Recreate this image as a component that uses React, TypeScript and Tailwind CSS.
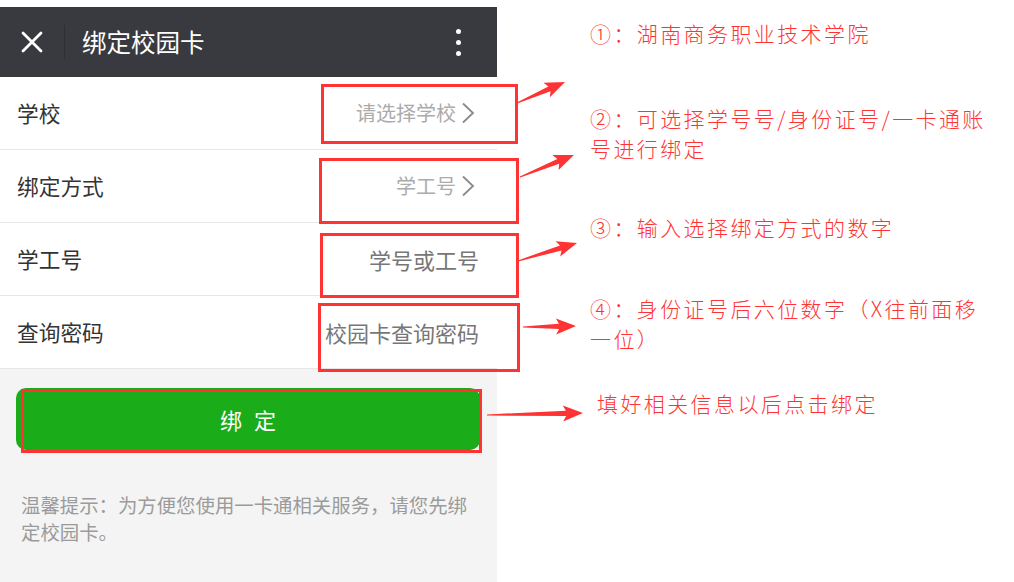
import React from "react";

type Pt = [number, number];

// tapered annotation arrow: thin tail, wide shaft near head, swept barbs
function arrowPoints(tail: Pt, tip: Pt) {
  const dx = tip[0] - tail[0];
  const dy = tip[1] - tail[1];
  const len = Math.hypot(dx, dy);
  const ux = dx / len;
  const uy = dy / len;
  const nx = -uy;
  const ny = ux;
  const headLen = 17;
  const base: Pt = [tip[0] - ux * headLen, tip[1] - uy * headLen];
  const barb: Pt = [base[0] - ux * 3, base[1] - uy * 3];
  const p = (o: Pt, k: number): string =>
    `${(o[0] + nx * k).toFixed(1)},${(o[1] + ny * k).toFixed(1)}`;
  return [
    p(tail, 0.6),
    p(base, 2.6),
    p(barb, 8),
    `${tip[0]},${tip[1]}`,
    p(barb, -8),
    p(base, -2.6),
    p(tail, -0.6),
  ].join(" ");
}

const arrows: [Pt, Pt][] = [
  [[517, 103], [565, 82]],
  [[520, 177], [574, 155]],
  [[518, 261], [577, 243]],
  [[523, 327], [576, 326]],
  [[487, 415], [583, 413]],
];

const boxes = [
  "left-[321px] top-[84px] w-[197px] h-[60px]",
  "left-[319px] top-[158px] w-[200px] h-[66px]",
  "left-[320px] top-[233px] w-[199px] h-[65px]",
  "left-[318px] top-[303px] w-[202px] h-[69px]",
  "left-[21px] top-[389px] w-[461px] h-[64px]",
];

function Chevron() {
  return (
    <svg width="14" height="22" viewBox="0 0 14 22" className="ml-[5px]">
      <polyline
        points="2,1.5 12,11 2,20.5"
        fill="none"
        stroke="#8a8a8a"
        strokeWidth="1.8"
      />
    </svg>
  );
}

function Row({
  label,
  children,
  padRight = "pr-[22px]",
}: {
  label: string;
  children: React.ReactNode;
  padRight?: string;
}) {
  return (
    <div
      className={`flex h-[73px] items-center justify-between border-b border-[#e6e6e6] bg-white pl-[17px] ${padRight}`}
    >
      <span className="text-[21.7px] text-[#333]">{label}</span>
      <div className="flex items-center">{children}</div>
    </div>
  );
}

const noteClass =
  "whitespace-nowrap text-[21px] font-light leading-[30px] tracking-[2.4px] text-[#f33]";

export default function App() {
  return (
    <div className="relative flex h-[582px] w-[1014px] overflow-hidden bg-white font-['Noto_Sans_CJK_SC',sans-serif]">
      {/* phone screenshot */}
      <div className="flex w-[497px] flex-col pt-[7px]">
        <div className="flex h-[70px] items-center bg-[#393a3f]">
          <div className="flex w-[64px] justify-center">
            <svg width="22" height="22" viewBox="0 0 22 22">
              <path
                d="M2 2 L20 20 M20 2 L2 20"
                stroke="#fff"
                strokeWidth="2.8"
                strokeLinecap="round"
              />
            </svg>
          </div>
          <div className="h-[34px] w-px bg-[#2e2f33]" />
          <span className="ml-[17px] text-[24.5px] text-white">绑定校园卡</span>
          <div className="ml-auto mr-[36px] flex flex-col items-center gap-[6px]">
            <span className="h-[5px] w-[5px] rounded-full bg-white" />
            <span className="h-[5px] w-[5px] rounded-full bg-white" />
            <span className="h-[5px] w-[5px] rounded-full bg-white" />
          </div>
        </div>

        <Row label="学校">
          <span className="text-[20px] text-[#ababab]">请选择学校</span>
          <Chevron />
        </Row>
        <Row label="绑定方式">
          <span className="text-[20px] text-[#ababab]">学工号</span>
          <Chevron />
        </Row>
        <Row label="学工号" padRight="pr-[18px]">
          <span className="text-[22px] text-[#777]">学号或工号</span>
        </Row>
        <Row label="查询密码" padRight="pr-[18px]">
          <span className="text-[22px] text-[#777]">校园卡查询密码</span>
        </Row>

        <div className="flex-1 bg-[#f4f4f4] px-[16px] pt-[19px]">
          <button
            type="button"
            className="flex h-[62px] w-[464px] items-center justify-center gap-[12px] rounded-[10px] bg-[#1aad19] text-[22px] text-white"
          >
            <span>绑</span>
            <span>定</span>
          </button>
          <div className="mt-[41px] pl-[5px] text-[19.4px] leading-[27px] text-[#9b9b9b]">
            <span className="block whitespace-nowrap">
              温馨提示：为方便您使用一卡通相关服务，请您先绑
            </span>
            <span className="block">定校园卡。</span>
          </div>
        </div>
      </div>

      {/* annotation notes */}
      <div className="flex flex-col pl-[93px] pt-[18px]">
        <p className={noteClass}>①：湖南商务职业技术学院</p>
        <p className={`${noteClass} mt-[55px]`}>
          ②：可选择学号号/身份证号/一卡通账
          <br />
          号进行绑定
        </p>
        <p className={`${noteClass} mt-[49px]`}>③：输入选择绑定方式的数字</p>
        <p className={`${noteClass} mt-[51px]`}>
          ④：身份证号后六位数字（X往前面移
          <br />
          一位）
        </p>
        <p className={`${noteClass} ml-[7px] mt-[35px]`}>
          填好相关信息以后点击绑定
        </p>
      </div>

      {/* red highlight boxes */}
      {boxes.map((b) => (
        <div
          key={b}
          className={`pointer-events-none absolute border-[3px] border-[#f33] ${b}`}
        />
      ))}

      <svg
        className="pointer-events-none absolute left-0 top-0"
        width="1014"
        height="582"
      >
        {arrows.map(([tail, tip], i) => (
          <polygon key={i} points={arrowPoints(tail, tip)} fill="#f33" />
        ))}
      </svg>
    </div>
  );
}
